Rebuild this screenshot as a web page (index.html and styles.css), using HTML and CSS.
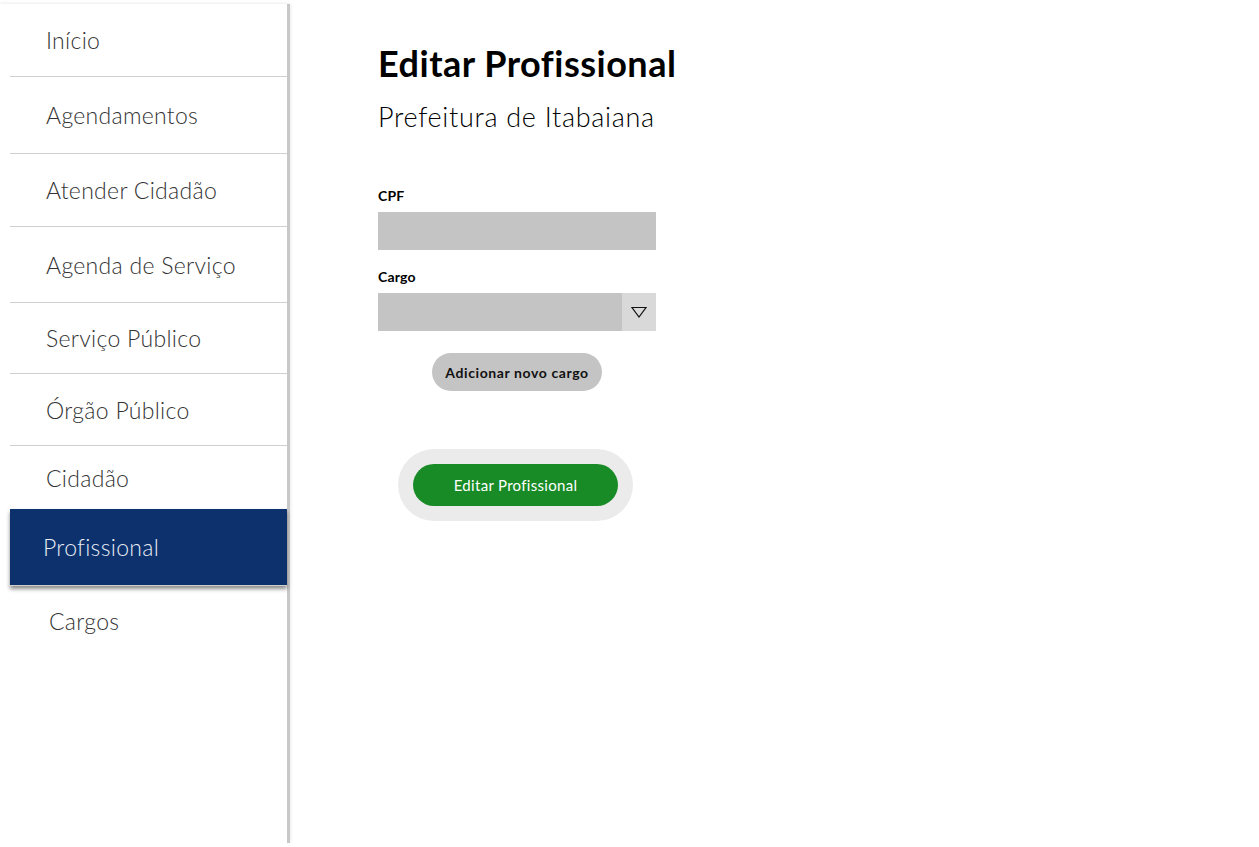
FILE: index.html
```html
<!DOCTYPE html>
<html lang="pt-BR">
<head>
<meta charset="utf-8">
<title>Editar Profissional</title>
<link rel="stylesheet" href="styles.css">
</head>
<body>
<div class="layout">
  <nav class="sidebar">
    <ul class="menu">
      <li class="item h73"><a>Início</a></li>
      <li class="item h77"><a>Agendamentos</a></li>
      <li class="item h73"><a>Atender Cidadão</a></li>
      <li class="item h76"><a>Agenda de Serviço</a></li>
      <li class="item h71"><a>Serviço Público</a></li>
      <li class="item h72"><a>Órgão Público</a></li>
      <li class="item h63 no-line"><a>Cidadão</a></li>
      <li class="item h77 active"><a>Profissional</a></li>
      <li class="item h70 no-line cargos"><a>Cargos</a></li>
    </ul>
  </nav>
  <main class="content">
    <h1 class="title">Editar Profissional</h1>
    <h2 class="subtitle">Prefeitura de Itabaiana</h2>
    <form class="form">
      <label class="label" for="cpf">CPF</label>
      <input class="input" id="cpf" type="text">
      <label class="label label-cargo" for="cargo">Cargo</label>
      <div class="select">
        <div class="select-field" id="cargo"></div>
        <div class="select-arrow">
          <svg width="16" height="12" viewBox="0 0 16 12"><path d="M1 1.5 H15 L8 11 Z" fill="none" stroke="#111" stroke-width="1.2" stroke-linejoin="miter"/></svg>
        </div>
      </div>
      <div class="add-row">
        <button type="button" class="btn-add">Adicionar novo cargo</button>
      </div>
      <div class="submit-wrap">
        <button type="button" class="btn-submit">Editar Profissional</button>
      </div>
    </form>
  </main>
</div>
</body>
</html>
```

FILE: styles.css
```css
* { box-sizing: border-box; }
html, body { margin: 0; padding: 0; background: #fff; }
body { font-family: "Lato", "Open Sans", sans-serif; color: #000; }

.layout { display: flex; align-items: flex-start; }

.sidebar {
  width: 290px;
  height: 839px;
  margin-top: 4px;
  flex-shrink: 0;
  background: #fff;
  border-right: 3px solid #c8c8c8;
  box-shadow: 0 0 4px rgba(0,0,0,0.12);
}

.menu { list-style: none; margin: 0; padding: 0 0 0 10px; }

.item {
  display: flex;
  align-items: center;
  border-bottom: 1px solid #cfcfcf;
  font-weight: 300;
  font-size: 23px;
  color: #333;
  letter-spacing: 0.3px;
}
.item a { padding-left: 36px; }
.item.no-line { border-bottom: none; }
.h73 { height: 73px; }
.h77 { height: 77px; }
.h76 { height: 76px; }
.h71 { height: 71px; }
.h72 { height: 72px; }
.h63 { height: 63px; }
.h70 { height: 70px; }
.item.active {
  background: #0c316d;
  color: #e8ecf4;
  box-shadow: 0 3px 4px rgba(0,0,0,0.45);
  position: relative;
}
.item.active a { padding-left: 33px; }
.item.cargos a { padding-left: 39px; }

.content { padding: 40px 0 0 88px; }

.title {
  margin: 0;
  font-size: 36px;
  font-weight: 700;
  letter-spacing: 0.5px;
  line-height: 46px;
}
.subtitle {
  margin: 14px 0 0;
  font-size: 27px;
  font-weight: 300;
  letter-spacing: 0.7px;
  line-height: 34px;
}

.form { display: flex; flex-direction: column; width: 278px; margin-top: 53px; }

.label { font-size: 14px; font-weight: 700; line-height: 18px; margin-bottom: 7px; letter-spacing: 0.2px; }
.label-cargo { margin-top: 18px; }

.input {
  width: 278px;
  height: 38px;
  border: none;
  background: #c4c4c4;
  margin: 0;
  padding: 0 8px;
}

.select { display: flex; height: 38px; }
.select-field { flex: 1; background: #c4c4c4; }
.select-arrow {
  width: 34px;
  background: #d9d9d9;
  display: flex;
  align-items: center;
  justify-content: center;
}

.add-row { display: flex; justify-content: center; margin-top: 22px; }
.btn-add {
  width: 170px;
  height: 38px;
  border: none;
  border-radius: 19px;
  background: #c4c4c4;
  font-family: inherit;
  font-size: 14px;
  font-weight: 700;
  letter-spacing: 0.6px;
  color: #111;
  padding: 0;
}

.submit-wrap {
  align-self: flex-start;
  margin: 58px 0 0 20px;
  width: 235px;
  height: 72px;
  border-radius: 36px;
  background: #ebebeb;
  display: flex;
  align-items: center;
  justify-content: center;
}
.btn-submit {
  width: 205px;
  height: 42px;
  border: none;
  border-radius: 21px;
  background: #188a26;
  color: #fff;
  font-family: inherit;
  font-size: 15px;
  font-weight: 400;
  padding: 0;
  letter-spacing: 0.3px;
}
```
